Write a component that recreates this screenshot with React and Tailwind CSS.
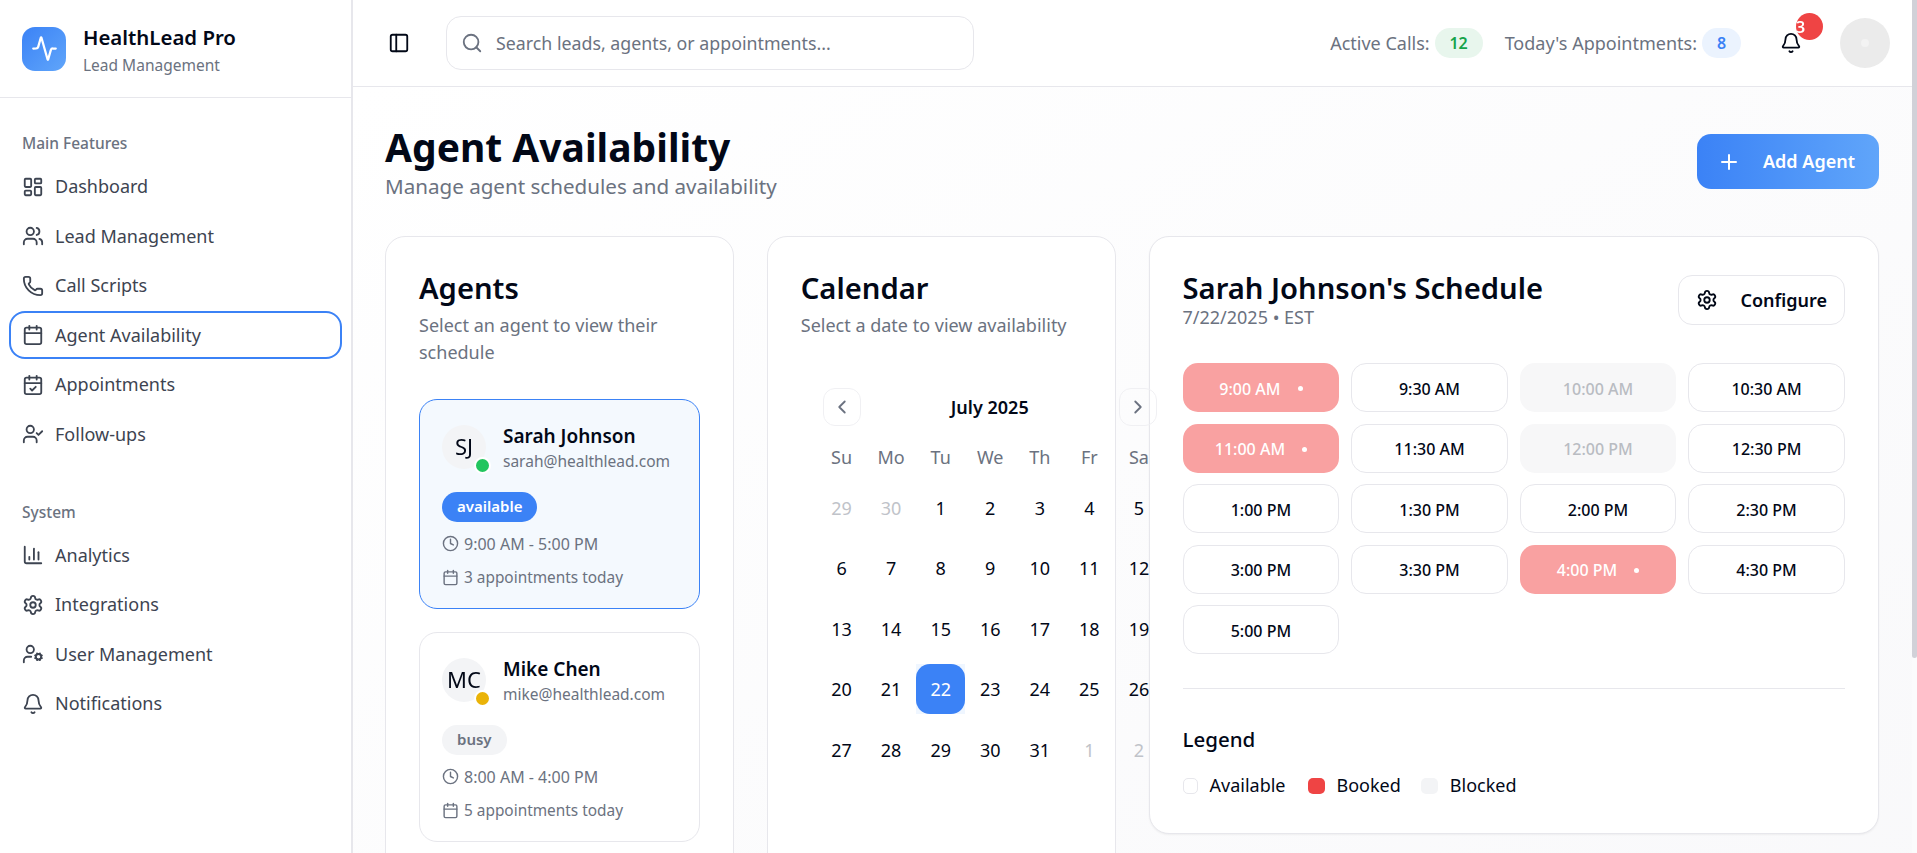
import React from 'react';
import {
  Activity, LayoutDashboard, Users, Phone, Calendar, CalendarCheck, UserCheck, ChartColumn,
  Settings, UserCog, Bell, PanelLeft, Search, Plus, ChevronLeft, ChevronRight, Clock,
} from 'lucide-react';

const mainNav = [
  { label: 'Dashboard', icon: LayoutDashboard },
  { label: 'Lead Management', icon: Users },
  { label: 'Call Scripts', icon: Phone },
  { label: 'Agent Availability', icon: Calendar, active: true },
  { label: 'Appointments', icon: CalendarCheck },
  { label: 'Follow-ups', icon: UserCheck },
];

const systemNav = [
  { label: 'Analytics', icon: ChartColumn },
  { label: 'Integrations', icon: Settings },
  { label: 'User Management', icon: UserCog },
  { label: 'Notifications', icon: Bell },
];

const agents = [
  {
    initials: 'SJ', name: 'Sarah Johnson', email: 'sarah@healthlead.com', status: 'available',
    hours: '9:00 AM - 5:00 PM', appts: '3 appointments today', selected: true,
  },
  {
    initials: 'MC', name: 'Mike Chen', email: 'mike@healthlead.com', status: 'busy',
    hours: '8:00 AM - 4:00 PM', appts: '5 appointments today',
  },
];

const weekDays = ['Su', 'Mo', 'Tu', 'We', 'Th', 'Fr', 'Sa'];

const dates = [
  [29, 30, 1, 2, 3, 4, 5],
  [6, 7, 8, 9, 10, 11, 12],
  [13, 14, 15, 16, 17, 18, 19],
  [20, 21, 22, 23, 24, 25, 26],
  [27, 28, 29, 30, 31, 1, 2],
];

const slots = [
  ['9:00 AM', 'booked'], ['9:30 AM'], ['10:00 AM', 'blocked'], ['10:30 AM'],
  ['11:00 AM', 'booked'], ['11:30 AM'], ['12:00 PM', 'blocked'], ['12:30 PM'],
  ['1:00 PM'], ['1:30 PM'], ['2:00 PM'], ['2:30 PM'],
  ['3:00 PM'], ['3:30 PM'], ['4:00 PM', 'booked'], ['4:30 PM'],
  ['5:00 PM'],
];

const NavItem = ({ item }) => {
  const Icon = item.icon;
  return (
    <a className={`flex items-center gap-[11px] h-[48px] mb-[1.5px] pl-[13px] rounded-[16px] text-[18px] text-[#3d4451] ${item.active ? 'ring-2 ring-inset ring-[#3b82f6]' : ''}`}>
      <Icon className="w-[22px] h-[22px] shrink-0" strokeWidth={2} />
      {item.label}
    </a>
  );
};

const Sidebar = () => (
  <aside className="sticky top-0 h-[853px] w-[353px] shrink-0 bg-white border-r-2 border-[#e7e7ec]">
    <div className="flex items-center gap-[17px] h-[98px] pl-[22px] border-b border-[#e7e7ec]">
      <div className="flex items-center justify-center w-[44px] h-[44px] rounded-[13px] bg-gradient-to-br from-[#3b82f6] to-[#60a5fa]">
        <Activity className="w-[27px] h-[27px] text-white" strokeWidth={2} />
      </div>
      <div className="mt-[5px]">
        <div className="text-[20.4px] leading-[28px] font-semibold text-[#020817]">HealthLead Pro</div>
        <div className="text-[15.5px] leading-[28px] text-[#6b7280]">Lead Management</div>
      </div>
    </div>
    <div className="px-[9px] pt-[32px]">
      <div className="pl-[13px] h-[26px] text-[15.5px] leading-[26px] font-medium text-[#6b7280]">Main Features</div>
      <nav className="mt-[6.5px]">
        {mainNav.map((item) => <NavItem key={item.label} item={item} />)}
      </nav>
      <div className="mt-[41px] pl-[13px] h-[26px] text-[15.5px] leading-[26px] font-medium text-[#6b7280]">System</div>
      <nav className="mt-[6px]">
        {systemNav.map((item) => <NavItem key={item.label} item={item} />)}
      </nav>
    </div>
  </aside>
);

const Header = () => (
  <header className="flex items-center h-[87px] pl-[35px] pr-[22px] bg-white border-b border-[#e7e7ec]">
    <PanelLeft className="w-[22px] h-[22px] text-[#020817] shrink-0" strokeWidth={2} />
    <div className="flex items-center ml-[36px] w-[528px] h-[54px] pl-[14px] rounded-[15px] border border-[#e7e7ec] bg-white">
      <Search className="w-[22px] h-[22px] text-[#6b7280]" strokeWidth={2} />
      <span className="ml-[13px] text-[17.8px] text-[#6b7280]">Search leads, agents, or appointments...</span>
    </div>
    <div className="flex items-center ml-auto text-[18px] text-[#6b7280]">
      <span>Active Calls:</span>
      <span className="flex items-center justify-center ml-[5px] w-[48px] h-[30px] rounded-full bg-[#e8f6ed] text-[16px] font-semibold text-[#16a34a]">12</span>
      <span className="ml-[22px]">Today's Appointments:</span>
      <span className="flex items-center justify-center ml-[5px] w-[39px] h-[30px] rounded-full bg-[#ebf3fe] text-[16px] font-semibold text-[#3b82f6]">8</span>
      <div className="relative ml-[39px] w-[22px] h-[22px]">
        <Bell className="w-[22px] h-[22px] text-[#020817]" strokeWidth={2} />
        <span className="absolute left-[16px] top-[-19px] w-[27px] h-[27px] rounded-full bg-[#ef4444] text-[16px] leading-[28px] font-semibold text-white">3</span>
      </div>
      <div className="flex items-center justify-center ml-[38px] w-[50px] h-[50px] rounded-full bg-[#ebebeb]">
        <span className="w-[8px] h-[8px] rounded-full bg-[#f3f3f3]" />
      </div>
    </div>
  </header>
);

const AgentCard = ({ agent }) => (
  <div className={`h-[210px] px-[22px] pt-[25px] rounded-[18px] border ${agent.selected ? 'border-[#3b82f6] bg-[#f4f9fe]' : 'border-[#e7e7ec] bg-white'}`}>
    <div className="flex items-start gap-[17px]">
      <div className="relative flex items-center justify-center w-[44px] h-[44px] rounded-full bg-[#f3f4f6] text-[22px] text-[#020817]">
        {agent.initials}
        <span className={`absolute right-[-5px] bottom-[-5px] w-[17px] h-[17px] rounded-full border-2 border-white ${agent.selected ? 'bg-[#22c55e]' : 'bg-[#eab308]'}`} />
      </div>
      <div className="mt-[-1px]">
        <div className="text-[19px] leading-[25px] font-semibold text-[#020817]">{agent.name}</div>
        <div className="text-[15.5px] leading-[24px] text-[#6b7280]">{agent.email}</div>
      </div>
    </div>
    <div className={`flex items-center w-fit mt-[19px] h-[30px] px-[15px] rounded-full text-[15px] font-semibold ${agent.selected ? 'bg-[#3b82f6] text-white' : 'bg-[#f3f4f6] text-[#6b7280]'}`}>
      {agent.status}
    </div>
    <div className="flex items-center gap-[5px] mt-[8px] h-[28px] text-[16px] text-[#6b7280]">
      <Clock className="w-[17px] h-[17px]" strokeWidth={2} />
      {agent.hours}
    </div>
    <div className="flex items-center gap-[5px] mt-[6px] h-[28px] text-[15.4px] text-[#6b7280]">
      <Calendar className="w-[17px] h-[17px]" strokeWidth={2} />
      {agent.appts}
    </div>
  </div>
);

const CalendarCard = () => (
  <div className="h-[836px] rounded-[20px] border border-[#e7e7ec] bg-white p-[33px]">
    <h2 className="text-[29.2px] leading-[36px] font-semibold text-[#020817]">Calendar</h2>
    <p className="mt-[6px] text-[18px] leading-[27px] text-[#6b7280]">Select a date to view availability</p>
    <div className="flex items-center justify-between mt-[49px] ml-[22px] w-[334px]">
      <button className="relative flex items-center justify-center w-[38px] h-[38px] rounded-[12px] border border-[#f0f0f3] text-[#6b7280]">
        <ChevronLeft className="w-[22px] h-[22px]" strokeWidth={2} />
      </button>
      <span className="text-[18px] font-semibold text-[#020817]">July 2025</span>
      <button className="relative flex items-center justify-center w-[38px] h-[38px] rounded-[12px] border border-[#f0f0f3] text-[#6b7280]">
        <ChevronRight className="w-[22px] h-[22px]" strokeWidth={2} />
      </button>
    </div>
    <div className="ml-[16px] w-[347px]">
      <div className="grid grid-cols-7 mt-[15px] text-[18px] text-[#6b7280] text-center">
        {weekDays.map((d) => <div key={d} className="h-[31px] leading-[32px]">{d}</div>)}
      </div>
      {dates.map((week, w) => (
        <div key={w} className="grid grid-cols-7 mt-[10.5px] text-[18px] text-center">
          {week.map((d, i) => {
            const outside = (w === 0 && d > 20) || (w === 4 && d < 20);
            const selected = w === 3 && d === 22;
            return (
              <div key={i} className={`h-[50px] ${selected ? 'bg-[#eff6ff]' : ''}`}>
                <div className={`h-[50px] leading-[50px] rounded-[14px] ${selected ? 'bg-[#3b82f6] text-white' : outside ? 'text-[#c0c3c9]' : 'text-[#020817]'}`}>{d}</div>
              </div>
            );
          })}
        </div>
      ))}
    </div>
  </div>
);

const Slot = ({ time, kind }) => {
  if (kind === 'booked') {
    return (
      <div className="flex items-center justify-center h-[49px] pt-[2px] rounded-[15px] bg-[#f9a1a1] text-[16px] font-medium text-white">
        {time}
        <span className="ml-[17px] w-[5px] h-[5px] rounded-full bg-white" />
      </div>
    );
  }
  if (kind === 'blocked') {
    return <div className="flex items-center justify-center h-[49px] pt-[2px] rounded-[15px] bg-[#f7f7f8] text-[16px] font-medium text-[#b9bcc2]">{time}</div>;
  }
  return <div className="flex items-center justify-center h-[49px] pt-[2px] rounded-[15px] border border-[#e7e7ec] bg-white text-[16px] font-medium text-[#020817]">{time}</div>;
};

const ScheduleCard = () => (
  <div className="col-span-2 self-start h-[598px] rounded-[20px] border border-[#e7e7ec] bg-white p-[33px] shadow-[0_1px_2px_rgba(0,0,0,0.05)]">
    <div className="flex items-start justify-between">
      <div>
        <h2 className="text-[29.2px] leading-[36px] font-semibold text-[#020817]">Sarah Johnson's Schedule</h2>
        <p className="text-[18px] leading-[22px] text-[#6b7280]">7/22/2025 • EST</p>
      </div>
      <button className="flex items-center gap-[22px] h-[50px] mt-[5px] pl-[17px] pr-[17px] rounded-[14px] border border-[#e7e7ec] bg-white text-[18px] font-semibold text-[#020817]">
        <Settings className="w-[22px] h-[22px]" strokeWidth={2} />
        Configure
      </button>
    </div>
    <div className="grid grid-cols-4 gap-x-[11.67px] gap-y-[11.5px] mt-[35px]">
      {slots.map(([time, kind]) => <Slot key={time} time={time} kind={kind} />)}
    </div>
    <div className="mt-[34px] pt-[36px] border-t border-[#e7e7ec]">
      <h3 className="text-[20.5px] leading-[28px] font-medium text-[#020817]">Legend</h3>
      <div className="flex items-center mt-[19px] text-[18px] text-[#020817]">
        <span className="w-[15px] h-[16px] rounded-[5px] border border-[#e7e7ec] bg-white" />
        <span className="ml-[12px]">Available</span>
        <span className="ml-[22px] w-[17px] h-[16px] rounded-[5px] bg-[#ef4444]" />
        <span className="ml-[12px]">Booked</span>
        <span className="ml-[20px] w-[17px] h-[16px] rounded-[5px] bg-[#f3f4f6]" />
        <span className="ml-[12px]">Blocked</span>
      </div>
    </div>
  </div>
);

export default function App() {
  return (
    <div
      className="relative flex h-[853px] overflow-hidden pr-[5px] bg-[#fbfbfc]"
      style={{ fontFamily: '"Noto Sans", sans-serif' }}
    >
      <Sidebar />
      <div className="flex-1 min-w-0">
        <Header />
        <main className="h-[1019px] pl-[32px] pr-[33px] pt-[47px] bg-gradient-to-br from-white to-[#f8f8fa]">
          <div className="flex items-start justify-between h-[102px]">
            <div className="mt-[-11px]">
              <h1 className="text-[39px] leading-[48px] font-bold text-[#020817]">Agent Availability</h1>
              <p className="text-[20.6px] leading-[30px] text-[#6b7280]">Manage agent schedules and availability</p>
            </div>
            <button className="flex items-center gap-[22px] h-[55px] w-[182px] pl-[20px] rounded-[14px] bg-gradient-to-r from-[#3b82f6] to-[#60a5fa] text-[18px] font-semibold text-white">
              <Plus className="w-[24px] h-[24px]" strokeWidth={2} />
              Add Agent
            </button>
          </div>
          <div className="grid grid-cols-4 gap-x-[33px]">
            <div className="h-[836px] rounded-[20px] border border-[#e7e7ec] bg-white p-[33px]">
              <h2 className="text-[29.2px] leading-[36px] font-semibold text-[#020817]">Agents</h2>
              <p className="mt-[6px] text-[18px] leading-[27px] text-[#6b7280]">Select an agent to view their schedule</p>
              <div className="flex flex-col gap-[23px] mt-[32.5px]">
                {agents.map((a) => <AgentCard key={a.name} agent={a} />)}
              </div>
            </div>
            <CalendarCard />
            <ScheduleCard />
          </div>
        </main>
      </div>
      {/* page scrollbar thumb */}
      <div className="absolute right-0 top-0 w-[5px] h-[658px] rounded-b-[3px] bg-[#d1d1d8]" />
    </div>
  );
}
